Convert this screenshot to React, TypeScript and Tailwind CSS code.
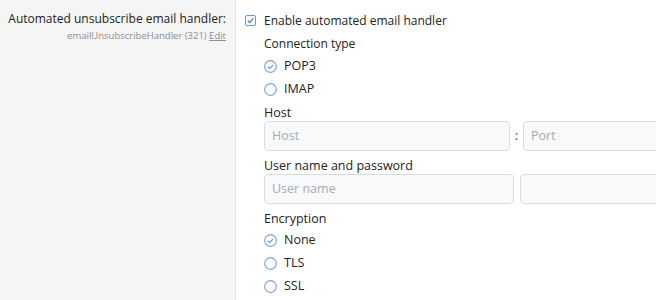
import React from 'react'

const font = { fontFamily: '"Open Sans", "Noto Sans", sans-serif' }

const Check = () => (
  <svg width="11" height="11" viewBox="0 0 11 11" className="shrink-0">
    <rect x="0.5" y="0.5" width="10" height="10" rx="1.5" fill="#fff" stroke="#6f98d4" />
    <path d="M2.7 5.6 L4.6 7.5 L8.3 3.4" fill="none" stroke="#4f80c8" strokeWidth="1.3" />
  </svg>
)

const Radio = ({ checked }: { checked?: boolean }) => (
  <svg width="13" height="13" viewBox="0 0 13 13" className="shrink-0">
    <circle cx="6.5" cy="6.5" r="5.8" fill="#fff" stroke="#7ea3d8" strokeWidth="1.2" />
    {checked && <path d="M3.9 6.7 L5.8 8.5 L9.2 4.8" fill="none" stroke="#6f98d4" strokeWidth="1.2" />}
  </svg>
)

const RadioRow = ({ label, checked }: { label: string; checked?: boolean }) => (
  <div className="flex items-center gap-[7px] h-[23px]">
    <Radio checked={checked} />
    <span className="text-[12.5px] text-[#222]">{label}</span>
  </div>
)

const Label = ({ children }: { children: React.ReactNode }) => (
  <div className="h-[20px] pt-[2px] leading-[20px] text-[12.5px] text-[#222]">{children}</div>
)

const Input = ({ placeholder, w }: { placeholder?: string; w: string }) => (
  <div className={`${w} h-[30px] shrink-0 rounded-[4px] border border-[#d9dcdf] bg-[#f7f9fb] flex items-center px-[7px] text-[12.5px] text-[#a8abae]`}>
    {placeholder}
  </div>
)

export default function App() {
  return (
    <div className="flex h-[300px] w-[656px] overflow-hidden bg-white" style={font}>
      <div className="w-[236px] shrink-0 bg-[#f5f5f5] border-r border-[#e4e4e4] pr-[9px] pt-[9px] text-right">
        <div className="whitespace-nowrap text-[12px] leading-[20px] text-[#222]">Automated unsubscribe email handler:</div>
        <div className="whitespace-nowrap text-[9.5px] leading-[14px] text-[#8e8e8e]">
          emailUnsubscribeHandler (321) <span className="underline">Edit</span>
        </div>
      </div>
      <div className="flex-1 pt-[9px] pl-[9px] overflow-hidden">
        <div className="flex items-center gap-[8px] h-[23px]">
          <Check />
          <span className="text-[12px] text-[#222]">Enable automated email handler</span>
        </div>
        <div className="pl-[19px]">
          <div className="h-[23px] flex items-center text-[12px] text-[#222]">Connection type</div>
          <RadioRow label="POP3" checked />
          <RadioRow label="IMAP" />
          <Label>Host</Label>
          <div className="flex items-center">
            <Input placeholder="Host" w="w-[246px]" />
            <span className="w-[13px] shrink-0 text-center text-[13px] text-[#444]">:</span>
            <Input placeholder="Port" w="w-[200px]" />
          </div>
          <div className="mt-[3px]">
            <Label>User name and password</Label>
          </div>
          <div className="flex items-center gap-[6px]">
            <Input placeholder="User name" w="w-[250px]" />
            <Input w="w-[200px]" />
          </div>
          <div className="mt-[3px]">
            <Label>Encryption</Label>
          </div>
          <div className="mt-[2px]">
            <RadioRow label="None" checked />
            <RadioRow label="TLS" />
            <RadioRow label="SSL" />
          </div>
        </div>
      </div>
    </div>
  )
}
